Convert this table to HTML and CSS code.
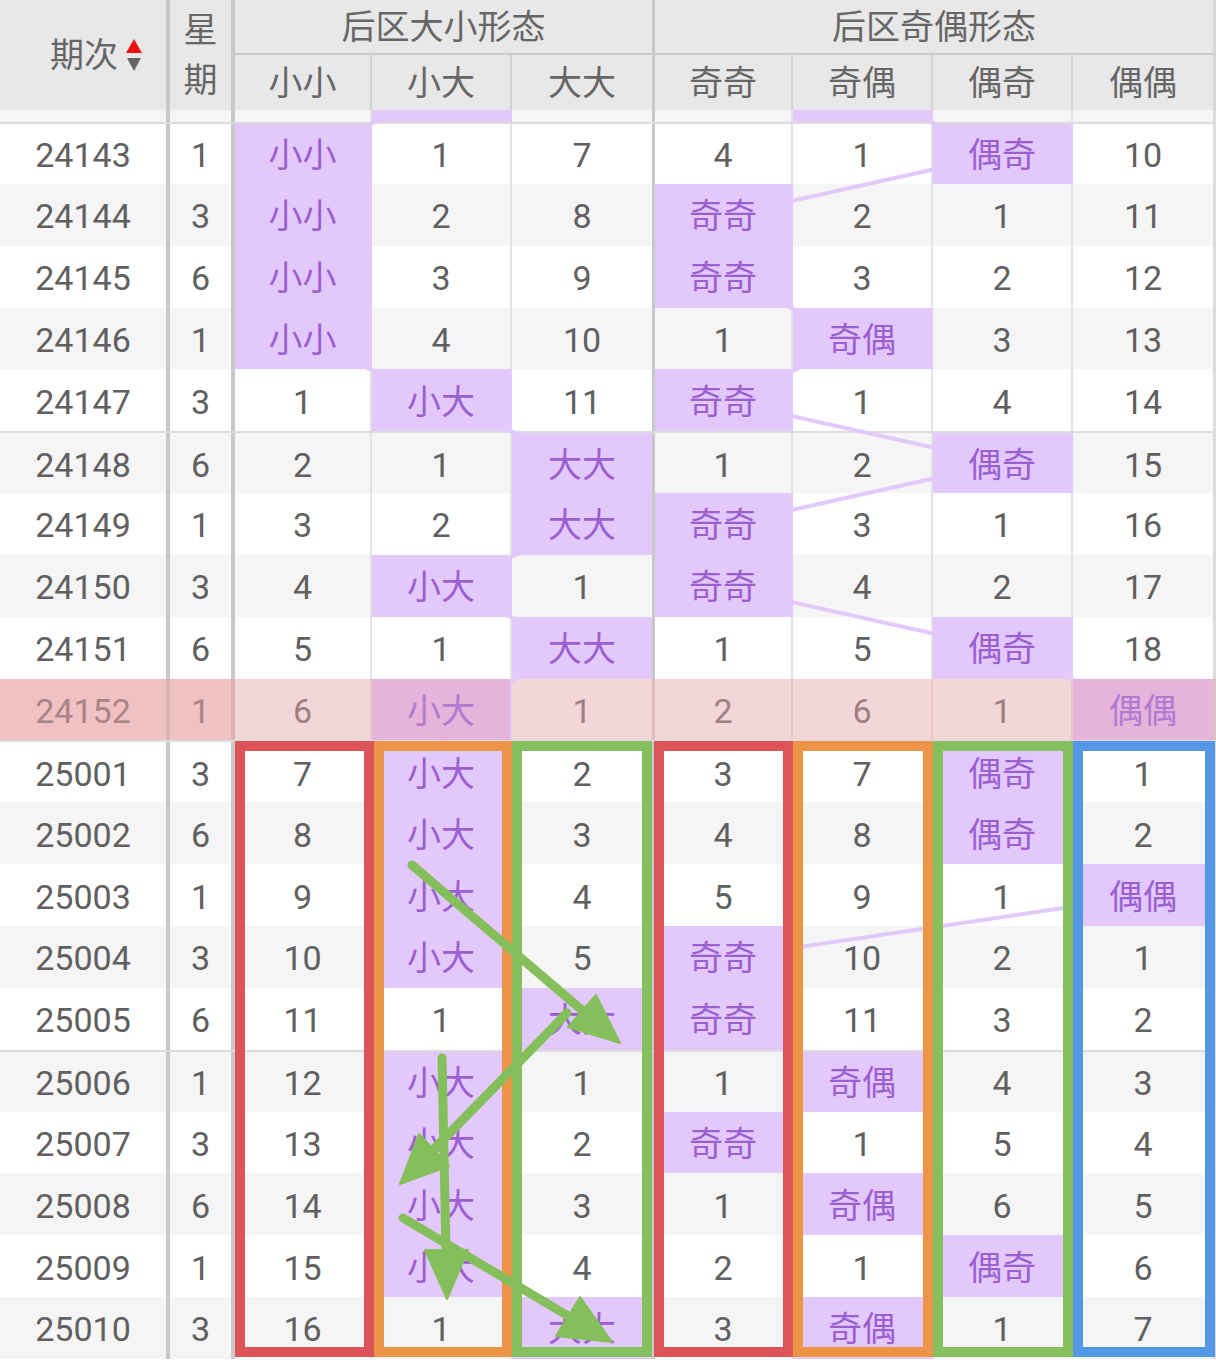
FILE: index.html
```html
<!DOCTYPE html>
<html lang="zh">
<head>
<meta charset="utf-8">
<title>后区形态走势</title>
<link rel="stylesheet" href="styles.css">
</head>
<body>
<div class="chart">
  <div class="head">
    <div class="hc qici"><span>期次</span><span class="sort"><i class="up"></i><i class="down"></i></span></div>
    <div class="hc week">星<br>期</div>
    <div class="hc grp grp1">后区大小形态</div>
    <div class="hc grp grp2">后区奇偶形态</div>
    <div class="hc sub">小小</div>
    <div class="hc sub">小大</div>
    <div class="hc sub thick">大大</div>
    <div class="hc sub">奇奇</div>
    <div class="hc sub">奇偶</div>
    <div class="hc sub">偶奇</div>
    <div class="hc sub last">偶偶</div>
  </div>

  <div class="row strip alt">
    <div class="c c0"></div><div class="c c1"></div><div class="c"></div><div class="c hl"></div><div class="c thick"></div><div class="c"></div><div class="c hl"></div><div class="c"></div><div class="c last"></div>
  </div>

  <div class="row sep"><div class="c c0">24143</div><div class="c c1">1</div><div class="c hl">小小</div><div class="c">1</div><div class="c thick">7</div><div class="c">4</div><div class="c">1</div><div class="c hl">偶奇</div><div class="c last">10</div></div>
  <div class="row alt"><div class="c c0">24144</div><div class="c c1">3</div><div class="c hl">小小</div><div class="c">2</div><div class="c thick">8</div><div class="c hl">奇奇</div><div class="c">2</div><div class="c">1</div><div class="c last">11</div></div>
  <div class="row"><div class="c c0">24145</div><div class="c c1">6</div><div class="c hl">小小</div><div class="c">3</div><div class="c thick">9</div><div class="c hl">奇奇</div><div class="c">3</div><div class="c">2</div><div class="c last">12</div></div>
  <div class="row alt"><div class="c c0">24146</div><div class="c c1">1</div><div class="c hl">小小</div><div class="c">4</div><div class="c thick">10</div><div class="c">1</div><div class="c hl">奇偶</div><div class="c">3</div><div class="c last">13</div></div>
  <div class="row"><div class="c c0">24147</div><div class="c c1">3</div><div class="c">1</div><div class="c hl">小大</div><div class="c thick">11</div><div class="c hl">奇奇</div><div class="c">1</div><div class="c">4</div><div class="c last">14</div></div>
  <div class="row sep alt"><div class="c c0">24148</div><div class="c c1">6</div><div class="c">2</div><div class="c">1</div><div class="c thick hl">大大</div><div class="c">1</div><div class="c">2</div><div class="c hl">偶奇</div><div class="c last">15</div></div>
  <div class="row"><div class="c c0">24149</div><div class="c c1">1</div><div class="c">3</div><div class="c">2</div><div class="c thick hl">大大</div><div class="c hl">奇奇</div><div class="c">3</div><div class="c">1</div><div class="c last">16</div></div>
  <div class="row alt"><div class="c c0">24150</div><div class="c c1">3</div><div class="c">4</div><div class="c hl">小大</div><div class="c thick">1</div><div class="c hl">奇奇</div><div class="c">4</div><div class="c">2</div><div class="c last">17</div></div>
  <div class="row"><div class="c c0">24151</div><div class="c c1">6</div><div class="c">5</div><div class="c">1</div><div class="c thick hl">大大</div><div class="c">1</div><div class="c">5</div><div class="c hl">偶奇</div><div class="c last">18</div></div>
  <div class="row pink"><div class="c c0">24152</div><div class="c c1">1</div><div class="c">6</div><div class="c hl">小大</div><div class="c thick">1</div><div class="c">2</div><div class="c">6</div><div class="c">1</div><div class="c last hl">偶偶</div></div>
  <div class="row sep"><div class="c c0">25001</div><div class="c c1">3</div><div class="c">7</div><div class="c hl">小大</div><div class="c thick">2</div><div class="c">3</div><div class="c">7</div><div class="c hl">偶奇</div><div class="c last">1</div></div>
  <div class="row alt"><div class="c c0">25002</div><div class="c c1">6</div><div class="c">8</div><div class="c hl">小大</div><div class="c thick">3</div><div class="c">4</div><div class="c">8</div><div class="c hl">偶奇</div><div class="c last">2</div></div>
  <div class="row"><div class="c c0">25003</div><div class="c c1">1</div><div class="c">9</div><div class="c hl">小大</div><div class="c thick">4</div><div class="c">5</div><div class="c">9</div><div class="c">1</div><div class="c last hl">偶偶</div></div>
  <div class="row alt"><div class="c c0">25004</div><div class="c c1">3</div><div class="c">10</div><div class="c hl">小大</div><div class="c thick">5</div><div class="c hl">奇奇</div><div class="c">10</div><div class="c">2</div><div class="c last">1</div></div>
  <div class="row"><div class="c c0">25005</div><div class="c c1">6</div><div class="c">11</div><div class="c">1</div><div class="c thick hl">大大</div><div class="c hl">奇奇</div><div class="c">11</div><div class="c">3</div><div class="c last">2</div></div>
  <div class="row sep alt"><div class="c c0">25006</div><div class="c c1">1</div><div class="c">12</div><div class="c hl">小大</div><div class="c thick">1</div><div class="c">1</div><div class="c hl">奇偶</div><div class="c">4</div><div class="c last">3</div></div>
  <div class="row"><div class="c c0">25007</div><div class="c c1">3</div><div class="c">13</div><div class="c hl">小大</div><div class="c thick">2</div><div class="c hl">奇奇</div><div class="c">1</div><div class="c">5</div><div class="c last">4</div></div>
  <div class="row alt"><div class="c c0">25008</div><div class="c c1">6</div><div class="c">14</div><div class="c hl">小大</div><div class="c thick">3</div><div class="c">1</div><div class="c hl">奇偶</div><div class="c">6</div><div class="c last">5</div></div>
  <div class="row"><div class="c c0">25009</div><div class="c c1">1</div><div class="c">15</div><div class="c hl">小大</div><div class="c thick">4</div><div class="c">2</div><div class="c">1</div><div class="c hl">偶奇</div><div class="c last">6</div></div>
  <div class="row alt"><div class="c c0">25010</div><div class="c c1">3</div><div class="c">16</div><div class="c">1</div><div class="c thick hl">大大</div><div class="c">3</div><div class="c hl">奇偶</div><div class="c">1</div><div class="c last">7</div></div>

  <svg class="links" width="1216" height="1360" viewBox="0 0 1216 1360">
    <polyline points="442,92 303.5,154 303.5,216 303.5,278 303.5,340 442,401 583.5,463 583.5,525 442,587 583.5,649 442,711 442,772 442,834 442,896 442,958 583.5,1020 442,1082 442,1144 442,1205 442,1267 583.5,1329"/>
    <polyline points="863,92 1003,154 724,216 724,278 863,340 724,401 1003,463 724,525 724,587 1003,649 1144.5,711 1003,772 1003,834 1144.5,896 724,958 724,1020 863,1082 724,1144 863,1205 1003,1267 863,1329"/>
  </svg>

  <div class="box red b1"></div>
  <div class="box orange b2"></div>
  <div class="box green b3"></div>
  <div class="box red b4"></div>
  <div class="box orange b5"></div>
  <div class="box green b6"></div>
  <div class="box blue b7"></div>

  <svg class="arrows" width="1216" height="1360" viewBox="0 0 1216 1360">
    <line x1="412" y1="865" x2="583" y2="1011"/>
    <polygon points="620,1043 568,1027 596,995"/>
    <line x1="567" y1="1013" x2="434" y2="1149"/>
    <polygon points="400,1184 449,1166 419,1134"/>
    <line x1="442" y1="1058" x2="446" y2="1252"/>
    <polygon points="447,1299 468,1250 425,1250"/>
    <line x1="403" y1="1218" x2="570" y2="1317"/>
    <polygon points="612,1342 556,1336 580,1297"/>
  </svg>
</div>
</body>
</html>
```

FILE: styles.css
```css
* { box-sizing: border-box; }

html, body {
  margin: 0;
  padding: 0;
  background: #ffffff;
}

body {
  font-family: Roboto, "Noto Sans CJK SC", "Noto Sans", sans-serif;
  font-size: 34px;
  color: #606060;
}

.chart {
  position: relative;
  width: 1216px;
  height: 1360px;
  overflow: hidden;
}

/* ---------- header ---------- */
.head {
  position: relative;
  z-index: 5;
  display: grid;
  grid-template-columns: 170px 65px 137px 140px 143px 138px 140px 140px 143px;
  grid-template-rows: 55px 55px;
  background: #e8e8e8;
  color: #666666;
}

.hc {
  display: flex;
  align-items: center;
  justify-content: center;
  line-height: 1;
}

.qici {
  grid-row: 1 / 3;
  grid-column: 1;
  border-right: 4px solid #c8c8c8;
  padding-left: 26px;
}

.sort {
  display: flex;
  flex-direction: column;
  align-items: center;
  gap: 5px;
  margin-left: 8px;
}

.sort i {
  display: block;
  width: 0;
  height: 0;
  border-left: 8px solid transparent;
  border-right: 8px solid transparent;
}

.sort .up { border-bottom: 14px solid #ee1111; }
.sort .down { border-top: 13px solid #666666; border-left-width: 7px; border-right-width: 7px; }

.week {
  grid-row: 1 / 3;
  grid-column: 2;
  border-right: 4px solid #c8c8c8;
  line-height: 50px;
  text-align: center;
}

.grp {
  grid-row: 1;
  border-bottom: 2px solid #cbcbcb;
}

.grp1 {
  grid-column: 3 / 6;
  border-right: 3px solid #c8c8c8;
}

.grp2 {
  grid-column: 6 / 10;
  border-right: 3px solid #d6d6d6;
}

.sub {
  grid-row: 2;
  border-right: 2px solid #d2d2d2;
}

.sub.thick { border-right: 3px solid #c8c8c8; }
.sub.last { border-right: 3px solid #d6d6d6; }

/* ---------- body rows ---------- */
.row {
  display: grid;
  grid-template-columns: 170px 65px 137px 140px 143px 138px 140px 140px 143px;
  height: 61.85px;
  background: #ffffff;
}

.row.alt { background: #f5f5f5; }
.row.sep { border-top: 2px solid #dcdcdc; }

.row.strip {
  height: 12px;
  overflow: hidden;
}

.c {
  display: flex;
  align-items: center;
  justify-content: center;
  line-height: 1;
  padding-top: 3px;
  border-right: 2px solid #e2e2e2;
}

.c.c0 { border-right: 4px solid #c8c8c8; }
.c.c1 { border-right: 4px solid #c8c8c8; }
.c.thick { border-right: 3px solid #c8c8c8; }
.c.last { border-right: 3px solid #dcdcdc; }

.c.hl {
  position: relative;
  z-index: 2;
  background: #e2c8fb;
  color: #9c5fcf;
}

.c.hl:not(.thick):not(.last):not(.c0):not(.c1) {
  border-right-color: #e2c8fb;
}

/* highlighted (latest) row */
.row.pink { background: #f3d6d7; color: #9d8082; }
.row.pink .c { border-right-color: #e6c6c7; }
.row.pink .c.c0,
.row.pink .c.c1 {
  background: #f0c1c3;
  color: #ab8486;
  border-right-color: #dcb3b5;
}
.row.pink .c.thick { border-right-color: #dcbcbd; }
.row.pink .c.hl {
  background: #e6b4da;
  color: #b27ad2;
  border-right-color: #e6b4da;
}
.row.pink .c.last.hl { border-right-color: #dcc0c4; }

/* ---------- overlays ---------- */
.links {
  position: absolute;
  left: 0;
  top: 0;
  z-index: 1;
  pointer-events: none;
}

.links polyline {
  fill: none;
  stroke: #e2c8fb;
  stroke-width: 4;
  stroke-linejoin: round;
}

.box {
  position: absolute;
  z-index: 3;
  top: 741px;
  height: 616px;
  border: 10px solid;
}

.box.red { border-color: #dc545a; }
.box.orange { border-color: #ee9449; }
.box.green { border-color: #86bf5d; }
.box.blue { border-color: #5497e6; }

.b1 { left: 235px; width: 139px; }
.b2 { left: 374px; width: 138px; }
.b3 { left: 512px; width: 140px; }
.b4 { left: 654px; width: 139px; }
.b5 { left: 793px; width: 140px; }
.b6 { left: 933px; width: 140px; }
.b7 { left: 1073px; width: 142px; }

.arrows {
  position: absolute;
  left: 0;
  top: 0;
  z-index: 4;
  pointer-events: none;
}

.arrows line {
  stroke: #85bf5b;
  stroke-width: 9;
  stroke-linecap: round;
}

.arrows polygon {
  fill: #85bf5b;
  stroke: #85bf5b;
  stroke-width: 2;
  stroke-linejoin: round;
}
```
